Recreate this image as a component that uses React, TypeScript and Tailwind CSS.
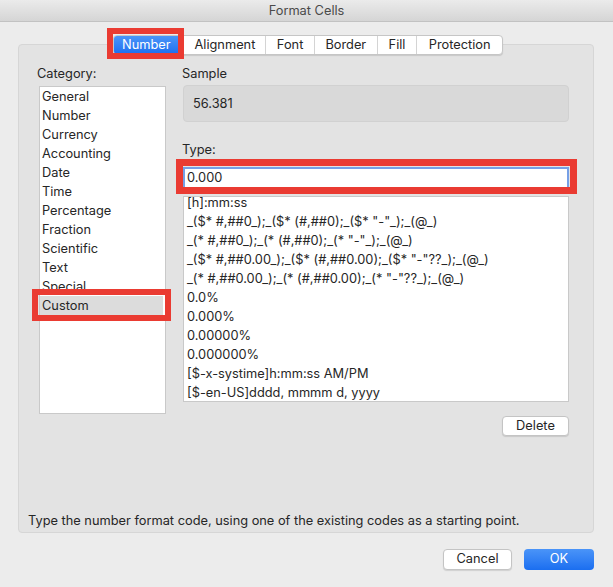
const categories = [
  "General",
  "Number",
  "Currency",
  "Accounting",
  "Date",
  "Time",
  "Percentage",
  "Fraction",
  "Scientific",
  "Text",
  "Special",
  "Custom",
];

const formats = [
  "[h]:mm:ss",
  '_($* #,##0_);_($* (#,##0);_($* "-"_);_(@_)',
  '_(* #,##0_);_(* (#,##0);_(* "-"_);_(@_)',
  '_($* #,##0.00_);_($* (#,##0.00);_($* "-"??_);_(@_)',
  '_(* #,##0.00_);_(* (#,##0.00);_(* "-"??_);_(@_)',
  "0.0%",
  "0.000%",
  "0.00000%",
  "0.000000%",
  "[$-x-systime]h:mm:ss AM/PM",
  "[$-en-US]dddd, mmmm d, yyyy",
];

const tabs = [
  { label: "Alignment", w: "w-[82px]" },
  { label: "Font", w: "w-[49px]" },
  { label: "Border", w: "w-[63px]" },
  { label: "Fill", w: "w-[40px]" },
  { label: "Protection", w: "w-[85px]" },
];

export default function App() {
  return (
    <div className="relative w-[613px] h-[587px] bg-[#ececec] text-[12.8px] text-[#262626] font-['Inter','Liberation_Sans',sans-serif] overflow-hidden">
      {/* title bar */}
      <div className="h-[22px] flex items-center justify-center bg-gradient-to-b from-[#ebebeb] to-[#d5d5d5] border-b border-[#c2c2c2] text-[#4a4a4a]">
        Format Cells
      </div>

      {/* group panel */}
      <div className="ml-[18px] mt-[22px] w-[576px] h-[489px] bg-[#e3e3e3] border border-[#d6d6d6] rounded-[4px] flex flex-col">
        {/* tab strip */}
        <div className="-mt-[10px] ml-[94px] w-[390px] h-[20px] flex bg-white border border-[#c6c6c6] rounded-[4px] shadow-[0_1px_1px_rgba(0,0,0,0.12)] overflow-hidden">
          <div className="w-[65px] flex items-center justify-center text-white bg-gradient-to-b from-[#4a94f8] to-[#1c6ff0]">
            Number
          </div>
          <div className="w-[6px]" />
          {tabs.map((t, i) => (
            <div
              key={t.label}
              className={`${t.w} flex items-center justify-center ${i < tabs.length - 1 ? "border-r border-[#d4d4d4]" : ""}`}
            >
              {t.label}
            </div>
          ))}
        </div>

        <div className="flex gap-[17px] pl-[18px] pt-[11px]">
          {/* category column */}
          <div className="flex flex-col">
            <div className="h-[16px] leading-[16px]">Category:</div>
            <div className="mt-[4px] ml-[2px] w-[127px] h-[328px] bg-white border border-[#c9c9c9] flex flex-col">
              {categories.map((c) => (
                <div
                  key={c}
                  className={`h-[19px] leading-[19px] pl-[2px] ${c === "Custom" ? "bg-[#dcdcdc] mr-[2px]" : ""}`}
                >
                  {c}
                </div>
              ))}
            </div>
          </div>

          {/* format column */}
          <div className="flex flex-col w-[386px]">
            <div className="h-[16px] leading-[16px] -ml-[1px]">Sample</div>
            <div className="mt-[3px] h-[37px] bg-[#d9d9d9] border border-[#d1d1d1] rounded-[4px] flex items-center pl-[9px]">
              56.381
            </div>
            <div className="mt-[20px] h-[16px] leading-[16px] -ml-[1px]">Type:</div>
            <div className="mt-[9px] h-[22px] bg-white border-2 border-[#76a0e6] flex items-center pl-[2px]">
              0.000
            </div>
            <div className="mt-[7px] h-[206px] bg-white border border-[#c9c9c9] overflow-hidden">
              <div className="-mt-[4px] pl-[3px]">
                {formats.map((f) => (
                  <div key={f} className="h-[19px] leading-[19px] whitespace-pre">
                    {f}
                  </div>
                ))}
              </div>
            </div>
            <div className="mt-[14px] flex justify-end">
              <button className="w-[67px] h-[20px] bg-white border border-[#c4c4c4] rounded-[4px] shadow-[0_1px_1px_rgba(0,0,0,0.12)] leading-none">
                Delete
              </button>
            </div>
          </div>
        </div>

        <div className="mt-auto mb-[3px] pl-[9px] h-[16px] leading-[16px]">
          Type the number format code, using one of the existing codes as a starting point.
        </div>
      </div>

      {/* dialog buttons */}
      <div className="mt-[16px] mr-[19px] flex justify-end gap-[12px]">
        <button className="w-[69px] h-[21px] bg-white border border-[#c4c4c4] rounded-[4px] shadow-[0_1px_1px_rgba(0,0,0,0.12)] leading-none">
          Cancel
        </button>
        <button className="w-[70px] h-[21px] rounded-[4px] text-white bg-gradient-to-b from-[#4a94f8] to-[#1a6ef0] leading-none">
          OK
        </button>
      </div>

      {/* red annotation boxes */}
      <div className="absolute left-[107px] top-[28px] w-[77px] h-[31px] border-[6px] border-[#ea3b32] pointer-events-none" />
      <div className="absolute left-[176px] top-[159px] w-[401px] h-[35px] border-[7px] border-[#ea3b32] pointer-events-none" />
      <div className="absolute left-[32px] top-[289px] w-[139px] h-[32px] border-[6px] border-[#ea3b32] pointer-events-none" />
    </div>
  );
}
